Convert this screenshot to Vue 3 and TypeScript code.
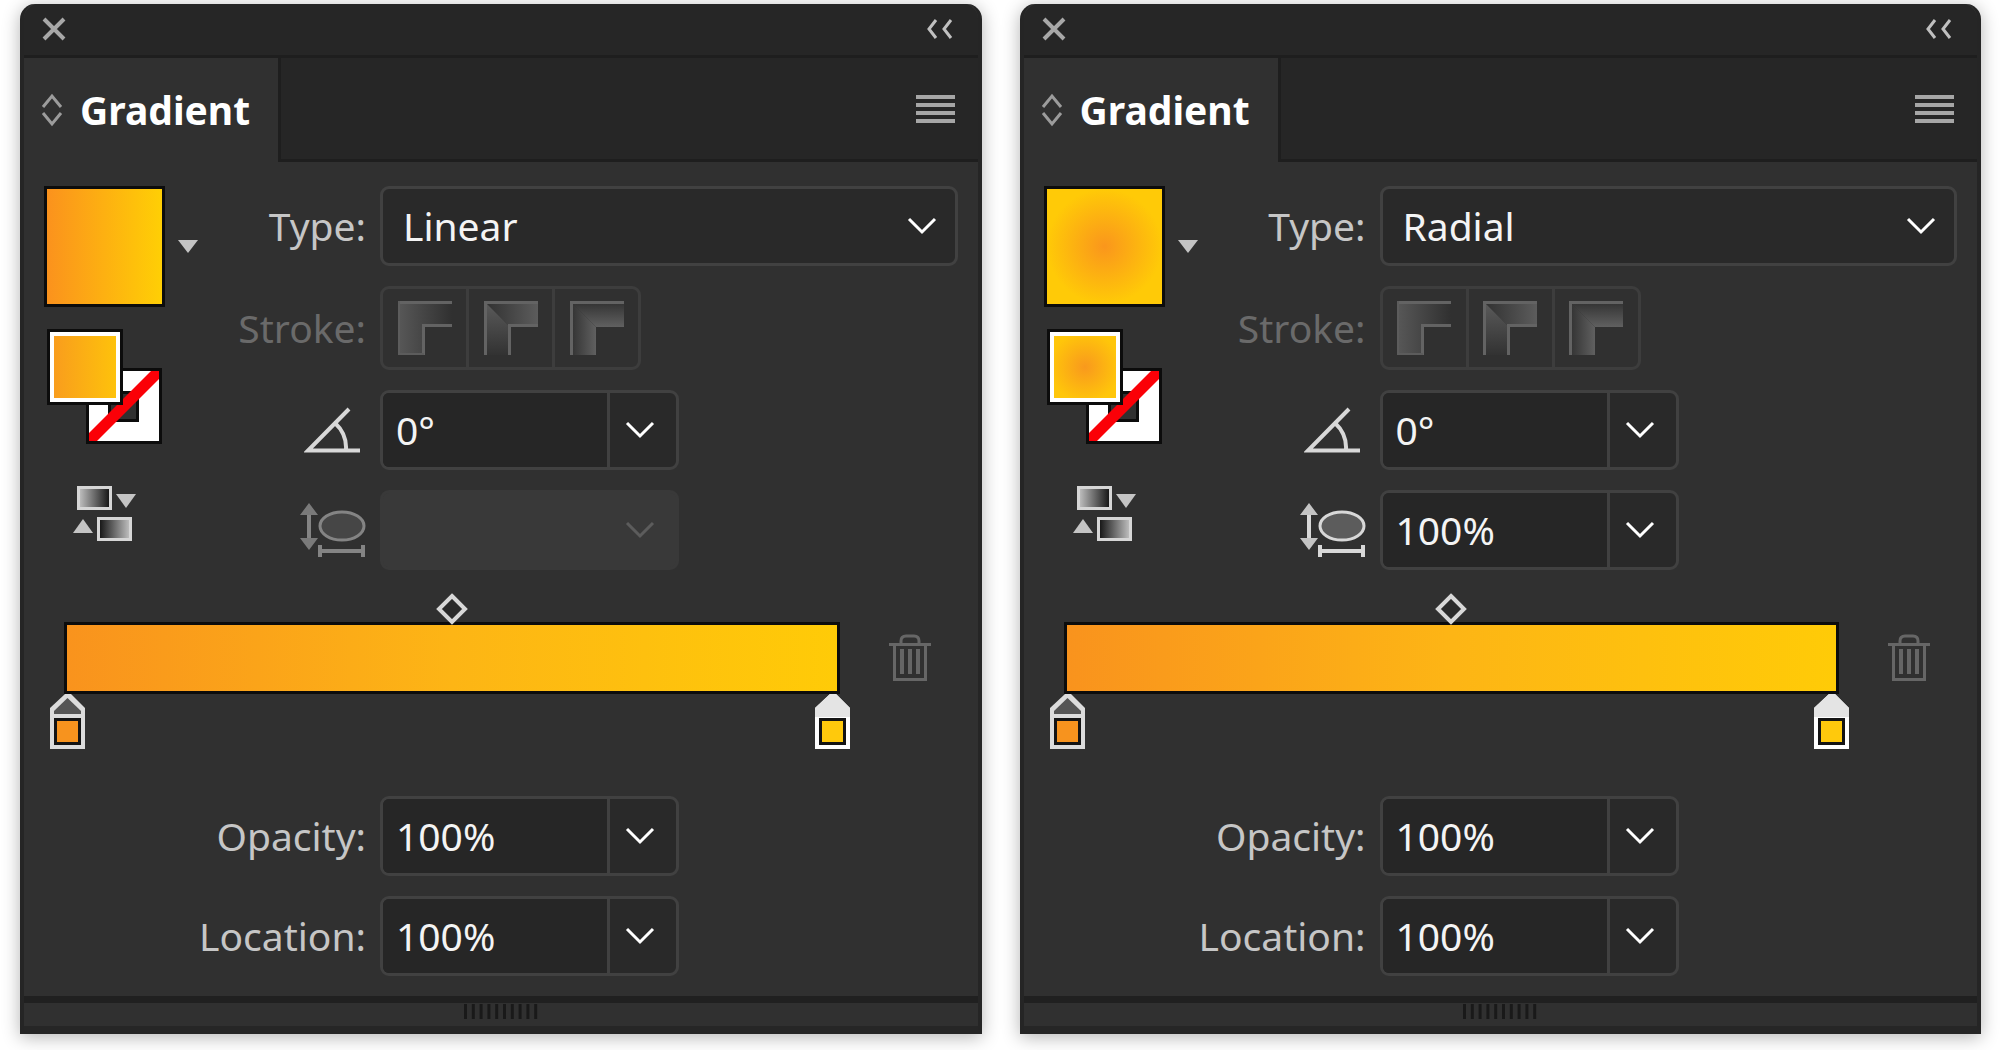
<script setup lang="ts">
import { reactive } from 'vue'

type GradientType = 'linear' | 'radial'

interface PanelState {
  id: string
  type: GradientType
  angle: string
  aspect: string
  opacity: string
  location: string
}

const panels = reactive<PanelState[]>([
  { id: 'a', type: 'linear', angle: '0°', aspect: '', opacity: '100%', location: '100%' },
  { id: 'b', type: 'radial', angle: '0°', aspect: '100%', opacity: '100%', location: '100%' },
])
</script>

<template>
  <main class="workspace">
    <section v-for="p in panels" :key="p.id" class="panel" aria-label="Gradient">
      <header class="titlebar">
        <button class="icon-button" type="button" aria-label="Close">
          <svg width="24" height="24" viewBox="0 0 24 24"><path d="M2 2L22 22M22 2L2 22" stroke="#a8a8a8" stroke-width="4" /></svg>
        </button>
        <button class="icon-button" type="button" aria-label="Collapse">
          <svg width="28" height="20" viewBox="0 0 28 20"><path d="M10 1L3 10L10 19M25 1L18 10L25 19" fill="none" stroke="#c0c0c0" stroke-width="3" /></svg>
        </button>
      </header>

      <div class="tabs">
        <button class="tab" type="button">
          <svg width="22" height="34" viewBox="0 0 22 34"><path d="M2 14L11 3L20 14M2 20L11 31L20 20" fill="none" stroke="#9c9c9c" stroke-width="3" /></svg>
          <span>Gradient</span>
        </button>
        <div class="tab-rest">
          <button class="icon-button" type="button" aria-label="Panel menu">
            <svg width="39" height="28" viewBox="0 0 39 28"><path d="M0 2H39M0 10H39M0 18H39M0 26H39" stroke="#a6a6a6" stroke-width="4" /></svg>
          </button>
        </div>
      </div>

      <div class="upper">
        <div class="swatches">
          <div class="preview-row">
            <button class="preview" :class="p.type" type="button" aria-label="Gradient preview"></button>
            <button class="icon-button" type="button" aria-label="Gradient presets">
              <svg width="20" height="14" viewBox="0 0 20 14"><path d="M0 0H20L10 13Z" fill="#c4c4c4" /></svg>
            </button>
          </div>
          <div class="fill-stroke">
            <button class="stroke-box" type="button" aria-label="Stroke: none">
              <svg width="76" height="76" viewBox="0 0 76 76">
                <rect width="76" height="76" fill="#0c0c0c" />
                <rect x="3" y="3" width="70" height="70" fill="#fff" />
                <rect x="23.500" y="24.500" width="28" height="28" fill="#303030" stroke="#0c0c0c" stroke-width="3" />
                <path d="M65 3H73V11L11 73H3V65Z" fill="#fb0007" />
              </svg>
            </button>
            <button class="fill-box" type="button" aria-label="Fill"><span :class="p.type"></span></button>
          </div>
          <button class="icon-button reverse" type="button" aria-label="Reverse gradient">
            <svg width="64" height="56" viewBox="0 0 64 56">
              <defs>
                <linearGradient :id="'rev1' + p.id"><stop offset="0" stop-color="#c4c4c4" /><stop offset="1" stop-color="#101010" /></linearGradient>
                <linearGradient :id="'rev2' + p.id"><stop offset="0" stop-color="#101010" /><stop offset="1" stop-color="#c4c4c4" /></linearGradient>
              </defs>
              <rect x="5.500" y="1.500" width="32" height="21" :fill="`url(#rev1${p.id})`" stroke="#d6d6d6" stroke-width="3" />
              <path d="M43 8H63L53 22Z" fill="#c4c4c4" />
              <path d="M0 47H20L10 33Z" fill="#c4c4c4" />
              <rect x="25.500" y="32.500" width="32" height="21" :fill="`url(#rev2${p.id})`" stroke="#d6d6d6" stroke-width="3" />
            </svg>
          </button>
        </div>

        <div class="fields">
          <label class="label" :for="'type-' + p.id">Type:</label>
          <div class="box select-box">
            <select :id="'type-' + p.id" v-model="p.type">
              <option value="linear">Linear</option>
              <option value="radial">Radial</option>
            </select>
            <svg class="select-arrow" width="30" height="18" viewBox="0 0 30 18"><path d="M2 2L15 15L28 2" fill="none" stroke="#fff" stroke-width="3" /></svg>
          </div>

          <span class="label dim" :id="'stroke-' + p.id">Stroke:</span>
          <div class="stroke-group" role="group" :aria-labelledby="'stroke-' + p.id">
            <button type="button" disabled aria-label="Within stroke">
              <svg width="54" height="54" viewBox="0 0 54 54">
                <defs><linearGradient :id="'w' + p.id"><stop offset="0" stop-color="#585858" /><stop offset="1" stop-color="#303030" /></linearGradient></defs>
                <path d="M0 0H54V26H27V54H0Z" :fill="`url(#w${p.id})`" />
                <path d="M0 1.500H54M54 24.500H25.500V54" fill="none" stroke="#636363" stroke-width="3" />
                <path d="M1 0V53H26" fill="none" stroke="#5c5c5c" stroke-width="2" />
              </svg>
            </button>
            <button type="button" disabled aria-label="Along stroke">
              <svg width="54" height="54" viewBox="0 0 54 54">
                <defs>
                  <linearGradient :id="'al' + p.id"><stop offset="0" stop-color="#303030" /><stop offset="1" stop-color="#5c5c5c" /></linearGradient>
                  <linearGradient :id="'av' + p.id" x2="0" y2="1"><stop offset="0" stop-color="#5c5c5c" /><stop offset="1" stop-color="#323232" /></linearGradient>
                </defs>
                <path d="M0 0H54V26H26Z" :fill="`url(#al${p.id})`" />
                <path d="M0 0L26 26V54H0Z" :fill="`url(#av${p.id})`" />
                <path d="M1.500 54V1.500H54M54 24.500H25.500V54" fill="none" stroke="#636363" stroke-width="3" />
              </svg>
            </button>
            <button type="button" disabled aria-label="Across stroke">
              <svg width="54" height="54" viewBox="0 0 54 54">
                <defs>
                  <linearGradient :id="'ct' + p.id" x2="0" y2="1"><stop offset="0" stop-color="#303030" /><stop offset="1" stop-color="#606060" /></linearGradient>
                  <linearGradient :id="'cl' + p.id"><stop offset="0" stop-color="#303030" /><stop offset="1" stop-color="#606060" /></linearGradient>
                </defs>
                <path d="M0 0H54V26H26Z" :fill="`url(#ct${p.id})`" />
                <path d="M0 0L26 26V54H0Z" :fill="`url(#cl${p.id})`" />
                <path d="M1.500 54V1.500H54" fill="none" stroke="#636363" stroke-width="3" />
              </svg>
            </button>
          </div>

          <label class="label" :for="'angle-' + p.id" aria-label="Angle">
            <svg class="angle-icon" width="56" height="46" viewBox="0 0 56 46"><path d="M45 2L4 43.500H56M31 16Q43 27 42 43" fill="none" stroke="#d8d8d8" stroke-width="4" /></svg>
          </label>
          <div class="box combo">
            <input :id="'angle-' + p.id" v-model="p.angle" type="text" />
            <button type="button" aria-label="Angle values">
              <svg width="30" height="18" viewBox="0 0 30 18"><path d="M2 2L15 15L28 2" fill="none" stroke="#fff" stroke-width="3" /></svg>
            </button>
          </div>

          <label class="label" :class="{ faded: p.type === 'linear' }" :for="'aspect-' + p.id" aria-label="Aspect ratio">
            <svg width="66" height="56" viewBox="0 0 66 56">
              <path d="M9 9V41" stroke="#d8d8d8" stroke-width="4" />
              <path d="M0 13L9 1L18 13ZM0 36L9 48L18 36Z" fill="#c4c4c4" />
              <ellipse cx="42" cy="24" rx="22" ry="14" fill="#5c5c5c" stroke="#d8d8d8" stroke-width="3" />
              <path d="M20 49H63M20 43V55M63 43V55" stroke="#d8d8d8" stroke-width="4" />
            </svg>
          </label>
          <div class="box combo" :class="{ off: p.type === 'linear' }">
            <input :id="'aspect-' + p.id" v-model="p.aspect" type="text" :disabled="p.type === 'linear'" />
            <button type="button" :disabled="p.type === 'linear'" aria-label="Aspect ratio values">
              <svg width="30" height="18" viewBox="0 0 30 18"><path d="M2 2L15 15L28 2" fill="none" :stroke="p.type === 'linear' ? '#5c5c5c' : '#fff'" stroke-width="3" /></svg>
            </button>
          </div>
        </div>
      </div>

      <div class="ramp-row">
        <div class="ramp">
          <button class="midpoint" type="button" aria-label="Midpoint">
            <svg width="32" height="32" viewBox="0 0 32 32"><path d="M16 3L29 16L16 29L3 16Z" fill="#2a2a2a" stroke="#d8d8d8" stroke-width="4" /></svg>
          </button>
          <button class="stop first" type="button" aria-label="Orange stop">
            <svg width="36" height="56" viewBox="0 0 36 56">
              <path d="M15 0H21L35 14V55H0V14Z" fill="#dcdcdc" />
              <path d="M17.500 4L31 17V20H4V17Z" fill="#555" />
              <rect x="4" y="24" width="27" height="27" fill="#141414" />
              <rect x="7" y="27" width="21" height="21" fill="#f7931e" />
            </svg>
          </button>
          <button class="stop last" type="button" aria-label="Yellow stop">
            <svg width="36" height="56" viewBox="0 0 36 56">
              <path d="M15 0H21L35 14V55H0V14Z" fill="#fff" />
              <path d="M15 0H21L35 14V23H0V14Z" fill="#e4e4e4" />
              <rect x="4" y="24" width="27" height="27" fill="#141414" />
              <rect x="7" y="27" width="21" height="21" fill="#ffc90c" />
            </svg>
          </button>
        </div>
        <button class="icon-button" type="button" disabled aria-label="Delete stop">
          <svg width="42" height="48" viewBox="0 0 42 48">
            <path d="M0 10.500H42M12 10V7Q12 2 17 2H25Q30 2 30 7V10M5.500 11V45.500H36.500V11" fill="none" stroke="#666" stroke-width="3" />
            <path d="M13 15V40M21 15V40M29 15V40" stroke="#666" stroke-width="4" />
          </svg>
        </button>
      </div>

      <div class="fields lower">
        <label class="label" :for="'opacity-' + p.id">Opacity:</label>
        <div class="box combo">
          <input :id="'opacity-' + p.id" v-model="p.opacity" type="text" />
          <button type="button" aria-label="Opacity values">
            <svg width="30" height="18" viewBox="0 0 30 18"><path d="M2 2L15 15L28 2" fill="none" stroke="#fff" stroke-width="3" /></svg>
          </button>
        </div>
        <label class="label" :for="'location-' + p.id">Location:</label>
        <div class="box combo">
          <input :id="'location-' + p.id" v-model="p.location" type="text" />
          <button type="button" aria-label="Location values">
            <svg width="30" height="18" viewBox="0 0 30 18"><path d="M2 2L15 15L28 2" fill="none" stroke="#fff" stroke-width="3" /></svg>
          </button>
        </div>
      </div>

      <footer class="grip">
        <svg width="74" height="15" viewBox="0 0 74 15"><rect v-for="n in 10" :key="n" :x="(n - 1) * 7.8" width="3" height="15" fill="#191919" /></svg>
      </footer>
    </section>
  </main>
</template>

<style>
body {
  margin: 0;
  background: #fff;
}
</style>

<style scoped>
.workspace {
  display: grid;
  grid-template-columns: 1fr 1fr;
  gap: 38px;
  padding: 4px 19px 20px 20px;
  font-family: "Noto Sans", "Open Sans", sans-serif;
  font-size: 39px;
  line-height: 52px;
  color: #f4f4f4;
}

.workspace *,
.panel {
  box-sizing: border-box;
}

button,
input,
select {
  margin: 0;
  padding: 0;
  border: 0;
  background: none;
  color: inherit;
  font: inherit;
}

svg {
  display: block;
  flex: none;
}

.panel {
  border: 4px solid #252525;
  border-top-width: 0;
  border-radius: 15px 15px 0 0;
  background: #303030;
  box-shadow: 0 3px 18px rgba(0, 0, 0, 0.3);
}

.titlebar {
  display: flex;
  align-items: center;
  justify-content: space-between;
  height: 54px;
  padding: 0 24px 0 18px;
  padding-bottom: 6px;
  padding-top: 4px;
  border-bottom: 3px solid #1e1e1e;
  border-radius: 15px 15px 0 0;
  background: #262626;
}

.tabs {
  display: flex;
  height: 104px;
}

.tab {
  display: flex;
  gap: 17px;
  width: 254px;
  padding-left: 17px;
  align-items: center;
  font-weight: 700;
  color: #fff;
}

.tab-rest {
  display: flex;
  flex: 1;
  align-items: center;
  justify-content: flex-end;
  padding-right: 23px;
  border-left: 3px solid #1e1e1e;
  border-bottom: 3px solid #1e1e1e;
  background: #262626;
}

.upper {
  display: flex;
  padding: 24px 20px 0;
}

.swatches {
  display: flex;
  flex-direction: column;
  align-items: flex-start;
  width: 160px;
}

.preview-row {
  display: flex;
  align-items: center;
  gap: 13px;
}

.preview {
  width: 121px;
  height: 121px;
  border: 3px solid #0c0c0c;
}

.linear {
  background: linear-gradient(90deg, #fb921d, #ffcf05) padding-box;
}

.radial {
  background: radial-gradient(circle closest-side, #fa961c, #ffca07) padding-box;
}

.fill-stroke {
  display: grid;
  width: 115px;
  height: 115px;
  margin: 22px 0 0 3px;
}

.stroke-box {
  grid-area: 1 / 1;
  place-self: end;
}

.fill-box {
  display: flex;
  grid-area: 1 / 1;
  place-self: start;
  width: 76px;
  height: 76px;
  padding: 4px;
  border: 3px solid #0c0c0c;
  background: #fff;
}

.fill-box span {
  flex: 1;
}

.fill-box .linear {
  background: linear-gradient(90deg, #f99d1d, #fec20b);
}

.fill-box .radial {
  background: radial-gradient(circle farthest-corner, #f9991d, #ffc60a 80%);
}

.reverse {
  margin: 42px 0 0 29px;
}

.fields {
  display: grid;
  flex: 1;
  grid-template-columns: 162px 1fr;
  gap: 20px 14px;
  align-items: center;
}

.lower {
  grid-template-columns: 322px 1fr;
  padding: 102px 20px 20px;
}

.label {
  display: flex;
  justify-content: flex-end;
  color: #c6c6c6;
}

.dim {
  color: #6a6a6a;
}

.faded {
  opacity: 0.5;
}

.angle-icon {
  margin-right: 6px;
}

.box {
  display: flex;
  height: 80px;
  border: 3px solid #414141;
  border-radius: 9px;
  background: #292929;
}

.select-box {
  display: grid;
}

.select-box select {
  grid-area: 1 / 1;
  padding-left: 20px;
  appearance: none;
}

.select-arrow {
  grid-area: 1 / 1;
  place-self: center end;
  margin-right: 18px;
  pointer-events: none;
}

.combo {
  width: 299px;
}

.combo input {
  flex: 1;
  min-width: 0;
  padding-left: 13px;
  border-radius: 6px 0 0 6px;
  background: #262626;
}

.combo button {
  display: flex;
  align-items: center;
  justify-content: center;
  width: 69px;
  padding-right: 6px;
  border-left: 3px solid #414141;
}

.off,
.off input {
  border-color: #393939;
  background: #393939;
}

.off button {
  border-color: #393939;
}

.stroke-group {
  display: flex;
  width: 261px;
  height: 84px;
  border: 3px solid #3d3d3d;
  border-radius: 9px;
}

.stroke-group button {
  display: flex;
  flex: 1;
  align-items: center;
  justify-content: center;
}

.stroke-group button + button {
  border-left: 3px solid #3d3d3d;
}

.ramp-row {
  display: flex;
  align-items: center;
  gap: 49px;
  padding: 52px 47px 0 40px;
}

.ramp {
  position: relative;
  flex: 1;
  height: 72px;
  border: 3px solid #0c0c0c;
  background: linear-gradient(90deg, #f9931d, #fdb515 50%, #ffcb07) padding-box;
}

.midpoint {
  position: absolute;
  left: 50%;
  bottom: 100%;
  transform: translateX(-50%);
}

.stop {
  position: absolute;
  top: 69px;
}

.first {
  left: -17px;
}

.last {
  right: -14px;
}

.grip {
  display: flex;
  justify-content: center;
  height: 34px;
  border-top: 7px solid #202020;
  border-bottom: 4px solid #262626;
  padding-top: 1px;
}
</style>
